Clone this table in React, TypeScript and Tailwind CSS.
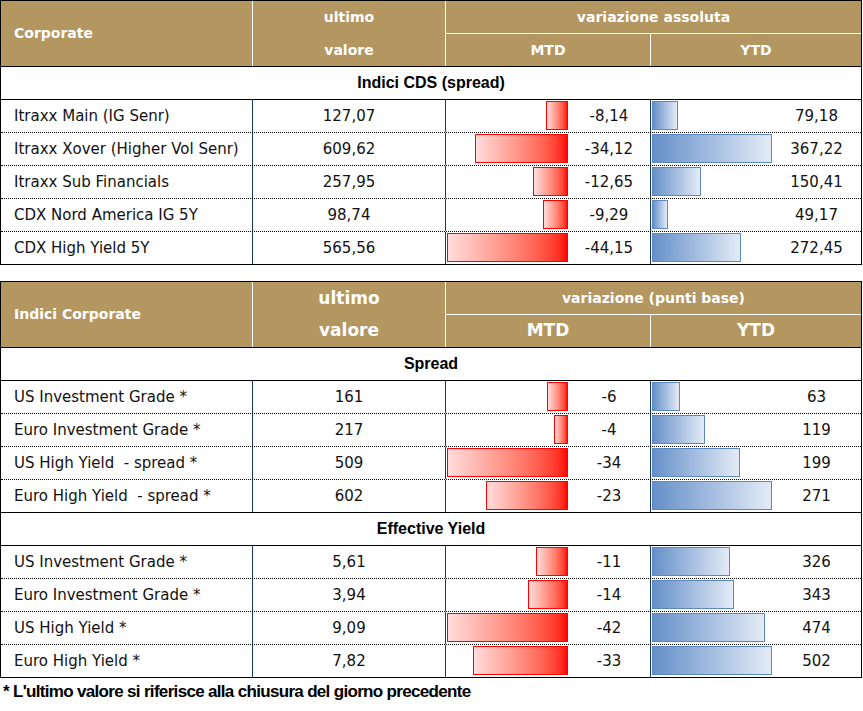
const CDS = [
  { name: "Itraxx Main (IG Senr)", last: "127,07", mtd: -8.14, ytd: 79.18 },
  { name: "Itraxx Xover (Higher Vol Senr)", last: "609,62", mtd: -34.12, ytd: 367.22 },
  { name: "Itraxx Sub Financials", last: "257,95", mtd: -12.65, ytd: 150.41 },
  { name: "CDX Nord America IG 5Y", last: "98,74", mtd: -9.29, ytd: 49.17 },
  { name: "CDX High Yield 5Y", last: "565,56", mtd: -44.15, ytd: 272.45 },
];

const SPREAD = [
  { name: "US Investment Grade *", last: "161", mtd: -6, ytd: 63 },
  { name: "Euro Investment Grade *", last: "217", mtd: -4, ytd: 119 },
  { name: "US High Yield  - spread *", last: "509", mtd: -34, ytd: 199 },
  { name: "Euro High Yield  - spread *", last: "602", mtd: -23, ytd: 271 },
];

const YIELD = [
  { name: "US Investment Grade *", last: "5,61", mtd: -11, ytd: 326 },
  { name: "Euro Investment Grade *", last: "3,94", mtd: -14, ytd: 343 },
  { name: "US High Yield *", last: "9,09", mtd: -42, ytd: 474 },
  { name: "Euro High Yield *", last: "7,82", mtd: -33, ytd: 502 },
];

type Row = { name: string; last: string; mtd: number; ytd: number };

const fmt = (v: number, decimals: boolean) =>
  decimals ? v.toFixed(2).replace(".", ",") : String(v);

function Header({ title, group, big }: { title: string; group: string; big?: boolean }) {
  const sub = big ? "text-[17px]" : "text-[14px]";
  return (
    <div className="flex h-[66px] border-b border-black bg-[#b39660] font-bold text-white">
      <div className="flex w-[251px] items-center pl-[13px] text-[14px]">{title}</div>
      <div className={`flex w-[193px] flex-col border-l border-white ${sub}`}>
        <div className="flex h-[33px] items-center justify-center">ultimo</div>
        <div className="flex flex-1 items-center justify-center">valore</div>
      </div>
      <div className="flex flex-1 flex-col border-l border-white">
        <div className="flex h-[33px] items-center justify-center border-b border-white text-[14px]">
          {group}
        </div>
        <div className={`flex flex-1 ${sub}`}>
          <div className="flex w-[204px] items-center justify-center">MTD</div>
          <div className="flex flex-1 items-center justify-center border-l border-white">YTD</div>
        </div>
      </div>
    </div>
  );
}

function Section({ label }: { label: string }) {
  return (
    <div className="flex h-[33px] items-center justify-center border-b border-black font-['Liberation_Sans',sans-serif] text-[16px] font-bold text-black">
      {label}
    </div>
  );
}

function Rows({ rows, decimals, last }: { rows: Row[]; decimals: boolean; last: "none" | "solid" }) {
  const maxM = Math.max(...rows.map((r) => Math.abs(r.mtd)));
  const maxY = Math.max(...rows.map((r) => Math.abs(r.ytd)));
  return (
    <>
      {rows.map((r, i) => {
        const isLast = i === rows.length - 1;
        const border = !isLast
          ? "h-[33px] border-b border-dotted border-black"
          : last === "solid"
          ? "h-[33px] border-b border-black"
          : "h-[32px]";
        return (
          <div key={r.name} className={`flex text-[15px] text-[#111] ${border}`}>
            <div className="flex w-[251px] items-center whitespace-pre pl-[13px]">{r.name}</div>
            <div className="flex w-[193px] items-center justify-center border-l border-[#17375e]">
              {r.last}
            </div>
            <div className="flex w-[205px] border-l border-[#17375e]">
              <div className="flex w-[122px] justify-end pl-[1px] pt-[1px]">
                <div
                  className="h-[29px] border border-[#ff0000] bg-linear-to-r from-[#ffdcdc] to-[#ff0000]"
                  style={{ width: (Math.abs(r.mtd) / maxM) * 121 }}
                />
              </div>
              <div className="flex flex-1 items-center justify-center">{fmt(r.mtd, decimals)}</div>
            </div>
            <div className="flex flex-1 border-l border-[#17375e]">
              <div className="flex w-[121px] pl-[1px] pt-[1px]">
                <div
                  className="h-[29px] border border-[#5b87c3] bg-linear-to-r from-[#6690c8] to-[#e4ebf6]"
                  style={{ width: (Math.abs(r.ytd) / maxY) * 120 }}
                />
              </div>
              <div className="flex flex-1 items-center justify-center">{fmt(r.ytd, decimals)}</div>
            </div>
          </div>
        );
      })}
    </>
  );
}

export default function App() {
  return (
    <div className="min-h-screen w-[863px] bg-white font-['DejaVu_Sans',sans-serif]">
      <div className="w-[862px] border border-black">
        <Header title="Corporate" group="variazione assoluta" />
        <Section label="Indici CDS (spread)" />
        <Rows rows={CDS} decimals last="none" />
      </div>

      <div className="mt-[16px] w-[862px] border border-black">
        <Header title="Indici Corporate" group="variazione (punti base)" big />
        <Section label="Spread" />
        <Rows rows={SPREAD} decimals={false} last="solid" />
        <Section label="Effective Yield" />
        <Rows rows={YIELD} decimals={false} last="none" />
      </div>

      <p className="mt-[4px] pl-[3px] font-['Liberation_Sans',sans-serif] text-[17px] font-bold leading-[20px] tracking-[-0.04em] text-black">
        * L'ultimo valore si riferisce alla chiusura del giorno precedente
      </p>
    </div>
  );
}
